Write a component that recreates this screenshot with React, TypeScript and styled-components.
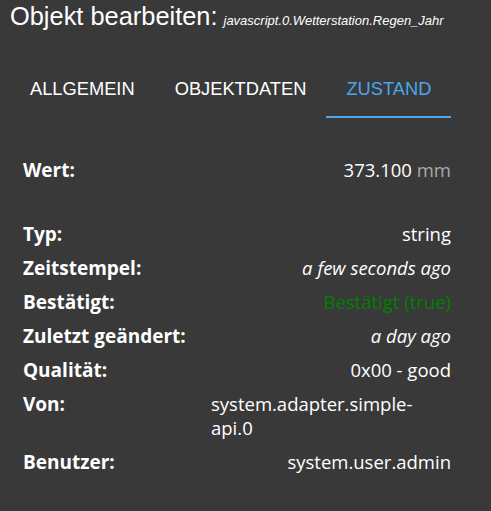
import React from 'react';
import styled, { createGlobalStyle } from 'styled-components';

const GlobalStyle = createGlobalStyle`
  html, body {
    margin: 0;
    padding: 0;
    background: #393939;
  }
`;

type Tone = 'normal' | 'italic' | 'green';

type Field = {
  label: string;
  value: string;
  unit?: string;
  tone?: Tone;
  spaced?: boolean;
};

const fields: Field[] = [
  { label: 'Wert:', value: '373.100', unit: 'mm', spaced: true },
  { label: 'Typ:', value: 'string' },
  { label: 'Zeitstempel:', value: 'a few seconds ago', tone: 'italic' },
  { label: 'Bestätigt:', value: 'Bestätigt (true)', tone: 'green' },
  { label: 'Zuletzt geändert:', value: 'a day ago', tone: 'italic' },
  { label: 'Qualität:', value: '0x00 - good' },
  { label: 'Von:', value: 'system.adapter.simple-api.0' },
  { label: 'Benutzer:', value: 'system.user.admin' },
];

const tabs = ['Allgemein', 'Objektdaten', 'Zustand'];

const App = () => {
  return (
    <Page>
      <GlobalStyle />
      <Header>
        <Title>Objekt bearbeiten:</Title>
        <ObjectId>javascript.0.Wetterstation.Regen_Jahr</ObjectId>
      </Header>
      <TabBar>
        {tabs.map((t, i) => (
          <Tab key={t} $active={i === 2}>
            {t}
          </Tab>
        ))}
      </TabBar>
      <StateTable>
        {fields.map((f) => (
          <Row key={f.label} $spaced={f.spaced}>
            <Label>{f.label}</Label>
            <Value $tone={f.tone || 'normal'}>
              <ValueText>
                {f.value}
                {f.unit && <Unit> {f.unit}</Unit>}
              </ValueText>
            </Value>
          </Row>
        ))}
      </StateTable>
    </Page>
  );
};

const Page = styled.div`
  width: 491px;
  height: 511px;
  background: #393939;
  color: #ffffff;
  overflow: hidden;
`;
const Header = styled.div`
  display: flex;
  align-items: baseline;
  gap: 6px;
  padding: 2px 10px 0 10px;
  height: 32px;
`;
const Title = styled.h2`
  margin: 0;
  font-family: 'Liberation Sans', Arial, sans-serif;
  font-weight: normal;
  font-size: 25.4px;
`;
const ObjectId = styled.span`
  font-family: 'Liberation Sans', Arial, sans-serif;
  font-style: italic;
  font-size: 13px;
`;
const TabBar = styled.div`
  display: flex;
  margin-top: 36px;
  padding-left: 10px;
`;
const Tab = styled.div<{ $active?: boolean }>`
  padding: 8px 20px 16px 20px;
  font-family: 'Liberation Sans', Arial, sans-serif;
  font-size: 18.3px;
  text-transform: uppercase;
  color: ${(p) => (p.$active ? '#4ca5ea' : '#ffffff')};
  border-bottom: 2px solid ${(p) => (p.$active ? '#4ca5ea' : 'transparent')};
`;
const StateTable = styled.div`
  display: grid;
  grid-template-columns: 188px 240px;
  padding: 35px 0 0 23px;
  font-family: 'Open Sans', 'Noto Sans', sans-serif;
  font-size: 18.5px;
`;
const Row = styled.div<{ $spaced?: boolean }>`
  display: contents;
  & > * {
    padding: 5px 0 ${(p) => (p.$spaced ? '35px' : '5px')} 0;
  }
`;
const Label = styled.div`
  font-weight: bold;
  font-size: 19px;
  line-height: 24px;
  white-space: nowrap;
`;
const Value = styled.div<{ $tone: Tone }>`
  text-align: right;
  line-height: 24px;
  font-style: ${(p) => (p.$tone === 'italic' ? 'italic' : 'normal')};
  color: ${(p) => (p.$tone === 'green' ? '#008000' : '#ffffff')};
`;
const ValueText = styled.span`
  display: inline-block;
  text-align: left;
`;
const Unit = styled.span`
  color: #aaaaaa;
`;

export default App;
